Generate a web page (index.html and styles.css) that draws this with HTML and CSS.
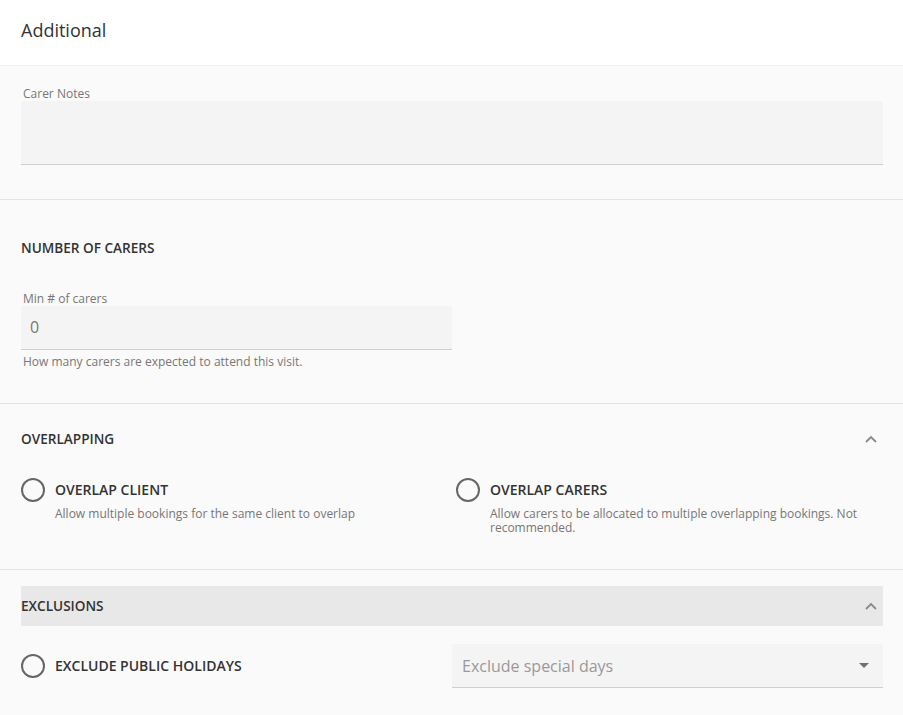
FILE: index.html
```html
<html>
  <head>
    <link rel="stylesheet" href="styles.css">
    <title>Additional</title>
  </head>
  <body>
    <div class="header">Additional</div>

    <div class="section notes">
      <div class="field-label">Carer Notes</div>
      <div class="field textarea"></div>
    </div>

    <div class="section carers">
      <div class="heading">NUMBER OF CARERS</div>
      <div class="half">
        <div class="field-label">Min # of carers</div>
        <div class="field input">0</div>
        <div class="hint">How many carers are expected to attend this visit.</div>
      </div>
    </div>

    <div class="section overlap">
      <div class="heading-row">
        <div class="heading">OVERLAPPING</div>
        <svg class="chevron" width="12" height="8" viewBox="0 0 12 8"><polyline points="1,7 6,2 11,7" fill="none" stroke="#8a8a8a" stroke-width="1.8"/></svg>
      </div>
      <div class="columns">
        <div class="option">
          <span class="radio"></span>
          <div>
            <div class="option-title">OVERLAP CLIENT</div>
            <div class="option-desc">Allow multiple bookings for the same client to overlap</div>
          </div>
        </div>
        <div class="option right">
          <span class="radio"></span>
          <div>
            <div class="option-title">OVERLAP CARERS</div>
            <div class="option-desc">Allow carers to be allocated to multiple overlapping bookings. Not recommended.</div>
          </div>
        </div>
      </div>
    </div>

    <div class="section exclusions">
      <div class="heading-row shaded">
        <div class="heading">EXCLUSIONS</div>
        <svg class="chevron" width="12" height="8" viewBox="0 0 12 8"><polyline points="1,7 6,2 11,7" fill="none" stroke="#8a8a8a" stroke-width="1.8"/></svg>
      </div>
      <div class="columns">
        <div class="option middle">
          <span class="radio"></span>
          <div class="option-title">EXCLUDE PUBLIC HOLIDAYS</div>
        </div>
        <div class="field select">
          <span>Exclude special days</span>
          <span class="caret"></span>
        </div>
      </div>
    </div>
  </body>
</html>
```

FILE: styles.css
```css
body {
  margin: 0;
  font-family: "Open Sans", sans-serif;
  background-color: #fafafa;
  color: #333;
}
.header {
  height: 65px;
  line-height: 60px;
  padding: 0 21px;
  font-size: 18px;
  background-color: #fff;
  border-bottom: 1px solid #efefef;
}
.section {
  padding: 0 20px 0 21px;
  border-bottom: 1px solid #e4e4e4;
}
.notes {
  padding-top: 19px;
  padding-bottom: 34px;
}
.carers {
  padding-top: 38px;
  padding-bottom: 33px;
}
.overlap {
  padding-top: 25px;
  padding-bottom: 34px;
}
.exclusions {
  padding-top: 16px;
  padding-bottom: 30px;
  border-bottom: 0;
}
.heading {
  font-size: 13.6px;
  font-weight: 600;
  line-height: 20px;
}
.carers .heading {
  margin-bottom: 32px;
}
.heading-row {
  display: flex;
  justify-content: space-between;
  align-items: center;
  padding-right: 6px;
}
.shaded {
  height: 40px;
  background-color: #e8e8e8;
  margin-bottom: 18px;
}
.field-label {
  font-size: 12px;
  line-height: 15px;
  padding-top: 1px;
  color: #777;
  padding-left: 2px;
}
.field {
  background-color: #f4f4f4;
  border-bottom: 1px solid #cfcfcf;
  border-radius: 2px 2px 0 0;
  box-sizing: border-box;
}
.textarea {
  height: 64px;
}
.half {
  width: 431px;
}
.input {
  height: 44px;
  line-height: 42px;
  padding-left: 9px;
  font-size: 16px;
  color: #777;
}
.hint {
  font-size: 12px;
  line-height: 16px;
  color: #777;
  padding-left: 2px;
  margin-top: 4px;
}
.columns {
  display: grid;
  grid-template-columns: 1fr 1fr;
}
.overlap .columns {
  margin-top: 29px;
}
.option {
  display: flex;
  gap: 10px;
}
.option.right {
  padding-left: 4px;
}
.option.middle {
  align-items: center;
}
.radio {
  flex: none;
  width: 24px;
  height: 24px;
  border: 2px solid #666;
  border-radius: 50%;
  box-sizing: border-box;
}
.option-title {
  font-size: 14px;
  font-weight: 600;
  line-height: 24px;
}
.option-desc {
  font-size: 12px;
  line-height: 14px;
  color: #777;
  margin-top: 5px;
}
.select {
  height: 44px;
  display: flex;
  align-items: center;
  justify-content: space-between;
  padding: 0 14px 0 10px;
  font-size: 16px;
  color: #999;
}
.caret {
  width: 0;
  height: 0;
  border-left: 5px solid transparent;
  border-right: 5px solid transparent;
  border-top: 5px solid #707070;
}
```
